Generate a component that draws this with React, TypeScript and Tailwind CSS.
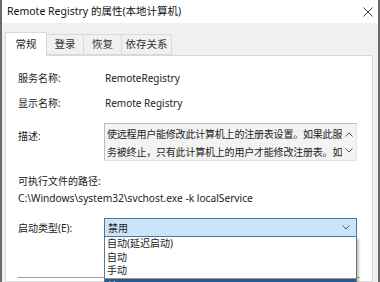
import React from "react";

const font = { fontFamily: '"Noto Sans", "Noto Sans CJK SC", sans-serif' };

type TabProps = { label: string; active?: boolean; width: string };

function Tab({ label, active, width }: TabProps) {
  if (active) {
    return (
      <div
        className={`${width} h-[24px] -mb-px relative z-10 bg-white border border-b-0 border-[#d9d9d9] flex items-center justify-center text-[10.5px] text-[#1a1a1a]`}
      >
        {label}
      </div>
    );
  }
  return (
    <div
      className={`${width} h-[21px] bg-[#f0f0f0] border border-l-0 border-[#d9d9d9] flex items-center justify-center text-[10.5px] text-[#333]`}
    >
      {label}
    </div>
  );
}

function Chevron({ up }: { up?: boolean }) {
  return (
    <svg width="8" height="5" viewBox="0 0 8 5" className="block">
      <path
        d={up ? "M0.5 4.5 L4 1 L7.5 4.5" : "M0.5 0.5 L4 4 L7.5 0.5"}
        fill="none"
        stroke="#555"
        strokeWidth="1"
      />
    </svg>
  );
}

export default function App() {
  return (
    <div
      className="w-[380px] h-[282px] overflow-hidden bg-[#f0f0f0] border-l-2 border-r-2 border-[#6b6b6b] flex flex-col"
      style={font}
    >
      {/* title bar */}
      <div className="h-[23px] shrink-0 bg-white flex items-center justify-between pl-[5px] pr-[5px]">
        <span className="text-[10.5px] text-[#111] leading-none">Remote Registry 的属性(本地计算机)</span>
        <svg width="10" height="10" viewBox="0 0 10 10">
          <path d="M0.5 0.5 L9.5 9.5 M9.5 0.5 L0.5 9.5" stroke="#333" strokeWidth="1" />
        </svg>
      </div>

      {/* tabs */}
      <div className="pl-[3px] pt-[9px] flex items-end shrink-0">
        <Tab label="常规" active width="w-[42px]" />
        <Tab label="登录" width="w-[37px]" />
        <Tab label="恢复" width="w-[38px]" />
        <Tab label="依存关系" width="w-[50px]" />
      </div>

      {/* panel */}
      <div className="ml-[3px] mr-[5px] flex-1 bg-white border border-[#d9d9d9] pl-[12px] pt-[14px] text-[10px] text-[#222] relative">
        <div className="flex leading-[16px]">
          <span className="w-[87px]">服务名称:</span>
          <span>RemoteRegistry</span>
        </div>
        <div className="flex leading-[16px] mt-[9px]">
          <span className="w-[87px]">显示名称:</span>
          <span>Remote Registry</span>
        </div>
        <div className="flex mt-[12px]">
          <span className="w-[86px] mt-[5px] leading-[16px]">描述:</span>
          <div className="w-[253px] h-[38px] bg-[#f3f3f3] border border-[#bdbdbd] border-r-[#e3e3e3] border-b-[#e3e3e3] flex">
            <div className="flex-1 pl-[2px] pt-[1px] leading-[18px] text-[#222] overflow-hidden whitespace-nowrap tracking-[-0.2px]">
              <div>使远程用户能修改此计算机上的注册表设置。如果此服</div>
              <div>务被终止，只有此计算机上的用户才能修改注册表。如</div>
            </div>
            <div className="w-[14px] shrink-0 flex flex-col items-center justify-between pt-[8px] pb-[7px]">
              <Chevron up />
              <Chevron />
            </div>
          </div>
        </div>
        <div className="mt-[12px] leading-[16px]">可执行文件的路径:</div>
        <div className="mt-[1px] leading-[16px] text-[10.2px]">C:\Windows\system32\svchost.exe -k localService</div>
        <div className="flex items-center mt-[12px] relative">
          <span className="w-[86px] leading-[16px]">启动类型(E):</span>
          <div className="w-[253px] h-[19px] bg-[#cce4f7] border border-[#3d7bad] flex items-center justify-between pl-[3px] pr-[6px]">
            <span className="leading-none">禁用</span>
            <Chevron />
          </div>
          {/* open dropdown list */}
          <div className="absolute left-[86px] top-[19px] w-[253px] z-20 bg-white border border-[#5d7b8e] border-t-0 shadow-[2px_2px_2px_rgba(160,110,70,0.45)]">
            <div className="pl-[2px] leading-[13.5px]">自动(延迟启动)</div>
            <div className="pl-[2px] leading-[13.5px]">自动</div>
            <div className="pl-[2px] leading-[13.5px]">手动</div>
            <div className="pl-[2px] leading-[14px] bg-[#1f5c9e] text-white border-t border-[#c08a60]">禁用</div>
          </div>
        </div>
        <div className="mt-[40px] mr-[12px] h-px bg-[#a0a0a0]" />
      </div>
    </div>
  );
}
